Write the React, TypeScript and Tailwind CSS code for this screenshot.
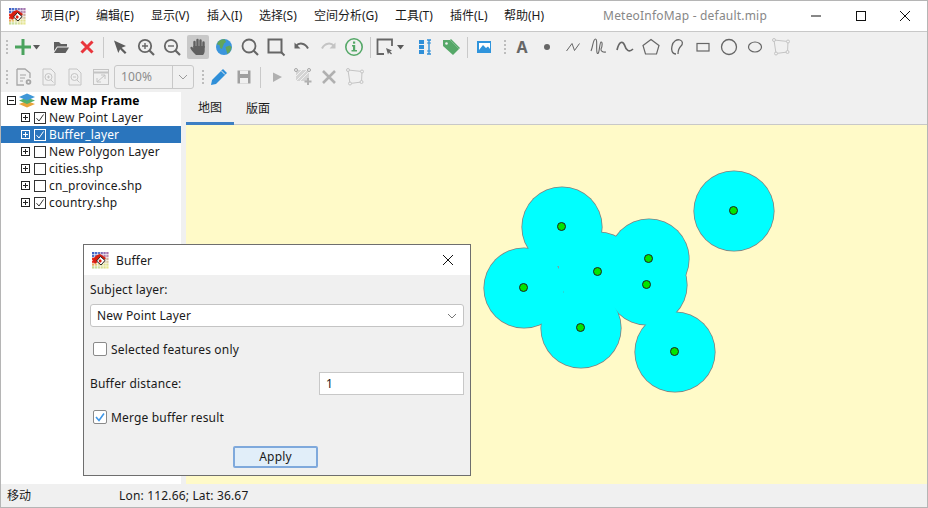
import React from "react";

const G = "#666666";
const D = "#c4c4c4";
const M = "#a6a6a6";

function Slot({ w = "w-[26px]", children }: { w?: string; children: React.ReactNode }) {
  return <div className={`${w} h-[22px] flex items-center justify-center shrink-0`}>{children}</div>;
}
function S({ w, children }: { w?: string; children: React.ReactNode }) {
  return (
    <Slot w={w}>
      <svg width="22" height="22" viewBox="0 0 22 22" fill="none" className="shrink-0">
        {children}
      </svg>
    </Slot>
  );
}
function Grip({ w }: { w: string }) {
  return (
    <div className={`${w} flex flex-col items-center gap-[2px] shrink-0`}>
      <div className="w-[2px] h-[2px] bg-[#bdbdbd]" />
      <div className="w-[2px] h-[2px] bg-[#bdbdbd]" />
      <div className="w-[2px] h-[2px] bg-[#bdbdbd]" />
      <div className="w-[2px] h-[2px] bg-[#bdbdbd]" />
    </div>
  );
}
function Sep() {
  return (
    <div className="w-[6px] flex justify-center shrink-0">
      <div className="w-px h-[21px] bg-[#c9c9c9]" />
    </div>
  );
}
function Caret() {
  return (
    <svg width="8" height="5" viewBox="0 0 8 5" className="shrink-0">
      <path d="M0 0h7L3.5 4.5z" fill="#5a5a5a" />
    </svg>
  );
}

function Logo() {
  const rows = [
    ["#3f5fc0", "#4a6fd0", "#5a78c8", "#8070b8", "#9a70b0", "#a878b0"],
    ["#4a70c8", "#7090d0", "#8c88c0", "#a080b0", "#b080a8", "#c090b0"],
    ["#e83020", "#e85030", "#d0d0c0", "#c8b0a0", "#c8a898", "#d0b0a0"],
    ["#e83020", "#e86040", "#d8d8b8", "#d8d0a8", "#d8c8a0", "#d8c8a0"],
    ["#e8a860", "#e8c870", "#e0e0a0", "#e0e098", "#e0e090", "#e0e090"],
    ["#c8d890", "#c8e0a0", "#d0e0a0", "#d8e098", "#e0e090", "#e8e890"],
  ];
  return (
    <svg width="17" height="17" viewBox="0 0 17 17" className="shrink-0">
      {rows.map((r, y) => r.map((c, x) => <rect key={`${x}-${y}`} x={x * 2.85} y={y * 2.85} width="2.3" height="2.3" fill={c} />))}
      <path d="M1 9C1 6 4 3 8 2l6 4-2 2-3-1-4 3-2 2z" fill="#d81e10" />
      <path d="M8.5 4.5 13 8.5 9 13 4.5 9z" fill="#fff" stroke="#222" strokeWidth="1" />
      <path d="M8 7l2 2-2 2-1.5-2z" fill="#e02010" />
    </svg>
  );
}

function Box({ plus, c = "#222" }: { plus?: boolean; c?: string }) {
  return (
    <svg width="9" height="9" viewBox="0 0 9 9" className="shrink-0">
      <rect x=".5" y=".5" width="8" height="8" fill="none" stroke={c} />
      <path d="M2 4.500h5" stroke={c} />
      {plus && <path d="M4.500 2v5" stroke={c} />}
    </svg>
  );
}
function Check({ on, c = "#333" }: { on?: boolean; c?: string }) {
  return (
    <svg width="12" height="12" viewBox="0 0 12 12" className="shrink-0">
      <rect x=".5" y=".5" width="11" height="11" fill="none" stroke={c} />
      {on && <path d="M2.5 6.2 5 9l4.5-6.5" fill="none" stroke={c} strokeWidth="1" />}
    </svg>
  );
}

function Layer({ name, on, sel }: { name: string; on?: boolean; sel?: boolean }) {
  return (
    <div className={`h-[17px] flex items-center pl-[20px] ${sel ? "bg-[#2a75bd] text-white" : "text-[#1a1a1a]"}`}>
      <Box plus c={sel ? "#fff" : "#222"} />
      <div className="w-[4px]" />
      <Check on={on} c={sel ? "#fff" : "#333"} />
      <span className="ml-[3px] tracking-[0.17px]">{name}</span>
    </div>
  );
}

function Row1() {
  return (
    <div className="h-[30px] flex items-center">
      <Grip w="w-[12px]" />
      <S w="w-[20px]">
        <path d="M3 11h16M11 3v16" stroke="#4ba35e" strokeWidth="3" />
      </S>
      <Caret />
      <div className="w-[7px]" />
      <S>
        <path d="M4 6h5l2 2h6v2.5H7L4 15z" fill="#5f5f5f" />
        <path d="M7.5 11.5H19L15.5 17H4z" fill="#5f5f5f" />
      </S>
      <S>
        <path d="M5.5 5.5l11 11M16.5 5.5l-11 11" stroke="#e9353c" strokeWidth="3" />
      </S>
      <Sep />
      <div className="w-px" />
      <S>
        <path d="M5 4.5 17 10l-4.3 1.7 4.8 4.8-1.6 1.6-4.8-4.8L9.3 17z" fill="#5c5c5c" />
      </S>
      <S>
        <circle cx="10" cy="10" r="6.2" stroke={G} strokeWidth="1.8" />
        <path d="M14.5 14.5 19 19" stroke={G} strokeWidth="2.2" />
        <path d="M7 10h6M10 7v6" stroke={G} strokeWidth="1.4" />
      </S>
      <S>
        <circle cx="10" cy="10" r="6.2" stroke={G} strokeWidth="1.8" />
        <path d="M14.5 14.5 19 19" stroke={G} strokeWidth="2.2" />
        <path d="M7 10h6" stroke={G} strokeWidth="1.4" />
      </S>
      <div className="w-[26px] h-[22px] flex items-center justify-center shrink-0">
        <div className="w-[22px] h-[24px] rounded-[2px] bg-[#c8c8c8] flex items-center justify-center">
          <svg width="20" height="20" viewBox="0 0 20 20" fill="none">
            <path d="M6.500 10V5M9.500 9V3M12.500 9V3.500M15.500 10V5.500" stroke="#606060" strokeWidth="2.400" strokeLinecap="round" />
            <path d="M5.300 9h11.400v4.500c0 2-.8 3.500-1.700 4.500H8c-1.500-1.200-4-4-5.500-6.500-.6-1.300 1-2.200 2-1.200l.8 1z" fill="#606060" />
          </svg>
        </div>
      </div>
      <S>
        <circle cx="11" cy="11" r="8" fill="#3b95dc" />
        <path d="M6 5c2-1.500 5-2 6-1.500L13 6l-2 1.500L10 10l-1 3-2-1-.5-3L4 8.500C4.300 7 5 6 6 5zM12.500 11l4-1.500 2 1.500-1 4-3 3-1-3z" fill="#62a55b" />
      </S>
      <S>
        <circle cx="10" cy="10" r="6.500" stroke={G} strokeWidth="1.800" />
        <path d="M14.500 14.500 19 19" stroke={G} strokeWidth="2.200" />
      </S>
      <S>
        <rect x="3.500" y="3.500" width="13" height="13" stroke={G} strokeWidth="2" />
        <path d="M16 16l3.500 3.500" stroke={G} strokeWidth="2" />
      </S>
      <S>
        <path d="M5 10c3-3.500 9-3.500 12 2.500" stroke={G} strokeWidth="2" />
        <path d="M3.500 6.500v6h6z" fill={G} />
      </S>
      <S>
        <path d="M17 10c-3-3.500-9-3.500-12 2.500" stroke={D} strokeWidth="2" />
        <path d="M18.500 6.500v6h-6z" fill={D} />
      </S>
      <S>
        <circle cx="11" cy="11" r="8.200" stroke="#55a868" strokeWidth="1.600" />
        <rect x="10" y="5.500" width="2.200" height="2.200" fill="#55a868" />
        <path d="M9 9h3.200v5H14v1.500H8.500V14H10v-3.500H9z" fill="#55a868" />
      </S>
      <Sep />
      <S w="w-[24px]">
        <path d="M10 18H3.500V3.500h14.500V10" stroke={G} strokeWidth="1.800" />
        <path d="M12 12l6 2.500-2 1 2 2-1 1-2-2-1 2z" fill={G} />
      </S>
      <Caret />
      <div className="w-[7px]" />
      <S>
        <path d="M5 4h5v4H5zM5 9h5v4H5zM5 14h5v4H5z" fill="#2f8fd8" />
        <path d="M13 4h4M13 18h4M15 4v14" stroke="#2f8fd8" strokeWidth="1.400" />
        <path d="M13 7h4M13 15h4" stroke="#2f8fd8" strokeWidth="1" />
      </S>
      <S>
        <path d="M3 4h7l9 9-6 6-10-9z" fill="#55a868" />
        <path d="M11 3l9 9-1 1-9-9z" fill="#55a868" />
        <circle cx="6.500" cy="7.500" r="1.300" fill="#f0f0f0" />
      </S>
      <Sep />
      <div className="w-px" />
      <S>
        <rect x="4" y="5" width="14" height="12" fill="#2f94dc" />
        <path d="M6 14l4-5 3 3 2-1.500 2 2.500V7H6z" fill="#fff" />
      </S>
      <div className="w-[3px]" />
      <Grip w="w-[10px]" />
      <Slot w="w-[24px]">
        <span className="text-[16px] leading-none font-bold text-[#666]">A</span>
      </Slot>
      <S>
        <circle cx="11" cy="11" r="3" fill={G} />
      </S>
      <S>
        <path d="M4.500 15 10 7.500l2.500 7 5-7" stroke={G} strokeWidth="1" />
      </S>
      <S>
        <path d="M3 15C5 11 5 3 7.500 3c2.500 0 0 13 2 14.500 2 1 2-11 3.500-11.500s1.500 4 0 7c-.5 2 2 3.500 5 3" stroke={G} strokeWidth="1.100" />
      </S>
      <S>
        <path d="M3 14C5 6 8 4 10.500 9 12 14 15 17 19 13" stroke={G} strokeWidth="1.700" />
      </S>
      <S>
        <path d="M11 3.500 19 9.500 16.500 18H5.500L3 9.500z" stroke={G} strokeWidth="1.200" />
      </S>
      <S>
        <path d="M10 18C6 18 5 14 6 10 7 5 11 3 14 4 17 5 17 8 15 10 13 12 12 14 12 18" stroke={G} strokeWidth="1.300" />
      </S>
      <S>
        <rect x="5" y="7.500" width="12" height="7.500" stroke={G} strokeWidth="1.200" />
      </S>
      <S>
        <circle cx="11" cy="11" r="7.500" stroke={G} strokeWidth="1.300" />
      </S>
      <S>
        <ellipse cx="11" cy="11" rx="6.500" ry="5" stroke={G} strokeWidth="1.200" />
      </S>
      <Poly />
    </div>
  );
}

function Poly() {
  return (
    <S>
      <path d="M4 4 18 5.500 17.500 16 6 17.500z" stroke={D} strokeWidth="1" />
      <circle cx="4" cy="4" r="1.500" fill="#f0f0f0" stroke={D} />
      <circle cx="18" cy="5.500" r="1.500" fill="#f0f0f0" stroke={D} />
      <circle cx="17.500" cy="16" r="1.500" fill="#f0f0f0" stroke={D} />
      <circle cx="6" cy="17.500" r="1.500" fill="#f0f0f0" stroke={D} />
    </S>
  );
}

function Row2() {
  return (
    <div className="h-[30px] flex items-center">
      <Grip w="w-[12px]" />
      <S w="w-[22px]">
        <path d="M4 3h8l5 4v5M4 3v16h7" stroke={M} strokeWidth="1.300" />
        <path d="M7 9h6M7 12h5M7 15h3" stroke={M} />
        <circle cx="15.500" cy="16" r="2.800" fill={M} />
        <circle cx="15.500" cy="16" r="1" fill="#f0f0f0" />
      </S>
      <div className="w-px" />
      <S>
        <path d="M5 3h8l4 4v12H5z" stroke={D} />
        <circle cx="10.500" cy="11" r="3.500" stroke={D} />
        <path d="M13 14l2.500 2.500M9 11h3M10.500 9.500v3" stroke={D} />
      </S>
      <S>
        <path d="M5 3h8l4 4v12H5z" stroke={D} />
        <circle cx="10.500" cy="11" r="3.500" stroke={D} />
        <path d="M13 14l2.500 2.500M9 11h3" stroke={D} />
      </S>
      <S>
        <rect x="3.500" y="3.500" width="15" height="15" stroke={D} />
        <path d="M3.500 6.500h15" stroke={D} strokeWidth="2" />
        <path d="M7 16l8-7M11 9h4v4M7 12v4h4" stroke={D} />
      </S>
      <div className="w-[80px] h-[24px] flex items-stretch border border-[#c8c8c8] rounded-[3px] shrink-0">
        <div className="w-[57px] pl-[6px] flex items-center text-[#8c8c8c] tracking-[0.17px]">100%</div>
        <div className="flex-1 border-l border-[#c8c8c8] flex items-center justify-center">
          <svg width="10" height="6" viewBox="0 0 10 6">
            <path d="M1 1l4 4 4-4" fill="none" stroke="#9a9a9a" />
          </svg>
        </div>
      </div>
      <div className="w-[4px]" />
      <Grip w="w-[9px]" />
      <S w="w-[24px]">
        <path d="M3 19l1-5L15 3l4 4L8 18z" fill="#2f8fd8" />
        <path d="M13.500 5l3.500 3.500" stroke="#f0f0f0" strokeWidth="1" />
      </S>
      <S>
        <path d="M4.500 4.500h13v13h-13z" fill="#a0a0a0" />
        <rect x="7" y="4.500" width="8" height="3.500" fill="#f0f0f0" />
        <rect x="7" y="12" width="8" height="5.500" fill="#f0f0f0" />
      </S>
      <Sep />
      <div className="w-px" />
      <S>
        <path d="M7 6.500 16 11l-9 5z" fill="#b0b0b0" />
      </S>
      <S>
        <path d="M4 4h13v11H4z" fill="#d4d4d4" />
        <path d="M4 10l6-6M4 15 15 4M8 15l9-9" stroke="#f0f0f0" />
        <path d="M16 12v7M12.500 15.500h7" stroke="#b0b0b0" strokeWidth="2" />
        <circle cx="4" cy="4" r="1.500" fill="#f0f0f0" stroke={M} />
        <circle cx="17" cy="4" r="1.500" fill="#f0f0f0" stroke={M} />
      </S>
      <S>
        <path d="M5 5l12 12M17 5 5 17" stroke="#b0b0b0" strokeWidth="2.600" />
      </S>
      <Poly />
    </div>
  );
}

const centers: [number, number][] = [
  [561.5, 226.5],
  [597.5, 271.5],
  [523.5, 287.5],
  [580.5, 327.5],
  [648.5, 258.5],
  [646.5, 284.5],
  [674.5, 351.5],
  [733.5, 210.5],
];

const menus = [
  ["项目(P)", "w-[55px]"],
  ["编辑(E)", "w-[55px]"],
  ["显示(V)", "w-[56px]"],
  ["插入(I)", "w-[52px]"],
  ["选择(S)", "w-[55px]"],
  ["空间分析(G)", "w-[81px]"],
  ["工具(T)", "w-[55px]"],
  ["插件(L)", "w-[54px]"],
  ["帮助(H)", "w-[60px]"],
];

export default function App() {
  return (
    <div className="relative w-[928px] h-[508px] border border-[#b5b5b5] flex flex-col overflow-hidden bg-[#f0f0f0] text-[12px] leading-none text-[#1a1a1a] [font-family:'Noto_Sans','Noto_Sans_CJK_SC',sans-serif]">
      {/* title bar */}
      <div className="h-[31px] shrink-0 bg-white border-b border-[#c8c8c8] flex items-center pl-[8px]">
        <Logo />
        <div className="w-[15px]" />
        {menus.map(([m, w]) => (
          <div key={m} className={`${w} shrink-0`}>
            {m}
          </div>
        ))}
        <div className="ml-auto mr-[26px] text-[#878787] tracking-[0.2px]">MeteoInfoMap - default.mip</div>
        <div className="w-[45px] h-[30px] flex items-center justify-center">
          <svg width="12" height="12" viewBox="0 0 12 12">
            <path d="M1 6h10" stroke="#111" />
          </svg>
        </div>
        <div className="w-[45px] h-[30px] flex items-center justify-center">
          <svg width="12" height="12" viewBox="0 0 12 12">
            <rect x="1.500" y="1.500" width="9" height="9" fill="none" stroke="#111" />
          </svg>
        </div>
        <div className="w-[44px] h-[30px] flex items-center justify-center">
          <svg width="12" height="12" viewBox="0 0 12 12">
            <path d="M1 1l10 10M11 1 1 11" stroke="#111" />
          </svg>
        </div>
      </div>
      <Row1 />
      <Row2 />
      {/* body */}
      <div className="h-[392px] shrink-0 flex">
        <div className="w-[180px] bg-white">
          <div className="h-[17px] flex items-center pl-[6px] font-bold text-black">
            <Box />
            <div className="w-[3px]" />
            <svg width="16" height="15" viewBox="0 0 16 15" className="shrink-0">
              <path d="M8 8 16 11 8 14.500 0 11z" fill="#e9a43a" />
              <path d="M8 4.500 16 7.500 8 11 0 7.500z" fill="#55b06a" />
              <path d="M8 .5 16 4 8 7.500 0 4z" fill="#3f97d8" />
            </svg>
            <span className="ml-[5px] tracking-[0.2px]">New Map Frame</span>
          </div>
          <Layer name="New Point Layer" on />
          <Layer name="Buffer_layer" on sel />
          <Layer name="New Polygon Layer" />
          <Layer name="cities.shp" />
          <Layer name="cn_province.shp" />
          <Layer name="country.shp" on />
        </div>
        <div className="w-[5px]" />
        <div className="flex-1 flex flex-col">
          <div className="h-[33px] shrink-0 flex border-b border-[#c8c8c8]">
            <div className="w-[48px] h-[33px] border-b-[3px] border-[#3d7fc4] flex items-center justify-center pt-[2px]">地图</div>
            <div className="w-[48px] h-[32px] flex items-center justify-center pt-[2px]">版面</div>
          </div>
          <div className="flex-1 bg-[#fffac8]">
            <svg width="741" height="359" viewBox="186 125 741 359" className="block">
              {centers.map(([x, y]) => (
                <circle key={`a${x}`} cx={x + 0.5} cy={y + 0.5} r="40.600" fill="#808080" />
              ))}
              {centers.map(([x, y]) => (
                <circle key={`b${x}`} cx={x + 0.5} cy={y + 0.5} r="39.800" fill="#00ffff" />
              ))}
              <rect x="558" y="266.500" width="1" height="1" fill="#c08080" />
              {centers.map(([x, y]) => (
                <circle key={`c${x}`} cx={x} cy={y} r="4" fill="#00e600" stroke="#222" />
              ))}
            </svg>
          </div>
        </div>
      </div>
      {/* status */}
      <div className="h-[23px] shrink-0 flex items-center pl-[6px]">
        <span className="w-[112px]">移动</span>
        <span className="tracking-[0.17px]">Lon: 112.66; Lat: 36.67</span>
      </div>

      {/* dialog */}
      <div className="absolute left-[82px] top-[243px] w-[388px] h-[232px] border border-[#6e6e6e] bg-[#f0f0f0] flex flex-col">
        <div className="h-[30px] shrink-0 bg-white flex items-center pl-[8px]">
          <Logo />
          <span className="ml-[7px] pt-[2px] tracking-[0.17px]">Buffer</span>
          <svg width="12" height="12" viewBox="0 0 12 12" className="ml-auto mr-[16px]">
            <path d="M1 1l10 10M11 1 1 11" stroke="#111" />
          </svg>
        </div>
        <div className="px-[6px] flex-1 flex flex-col tracking-[0.17px]">
          <div className="h-[14px] mt-[8px] flex items-center">Subject layer:</div>
          <div className="h-[23px] mt-[7px] bg-white border border-[#c4c4c4] rounded-[3px] flex items-center pl-[6px] pr-[6px]">
            New Point Layer
            <svg width="10" height="6" viewBox="0 0 10 6" className="ml-auto">
              <path d="M1 1l4 4 4-4" fill="none" stroke="#777" />
            </svg>
          </div>
          <div className="flex items-center h-[14px] mt-[15px] pl-[3px]">
            <div className="w-[14px] h-[14px] bg-white border border-[#8a8a8a] rounded-[2px]" />
            <span className="ml-[4px] pt-[2px]">Selected features only</span>
          </div>
          <div className="flex items-center h-[23px] mt-[16px]">
            <span className="w-[229px]">Buffer distance:</span>
            <div className="flex-1 h-[23px] bg-white border border-[#c8c8c8] flex items-center pl-[6px]">1</div>
          </div>
          <div className="flex items-center h-[14px] mt-[15px] pl-[3px]">
            <div className="w-[14px] h-[14px] bg-white border border-[#8a8a8a] rounded-[2px] flex items-center justify-center">
              <svg width="12" height="12" viewBox="0 0 12 12">
                <path d="M2 6l3 3.500L10 2.500" fill="none" stroke="#3f97e8" strokeWidth="1.600" />
              </svg>
            </div>
            <span className="ml-[4px] pt-[2px]">Merge buffer result</span>
          </div>
          <div className="mt-[22px] flex">
            <div className="ml-[143px] w-[85px] h-[22px] border-2 border-[#7fa9dc] rounded-[2px] bg-[#e1eef9] flex items-center justify-center">Apply</div>
          </div>
        </div>
      </div>
    </div>
  );
}
